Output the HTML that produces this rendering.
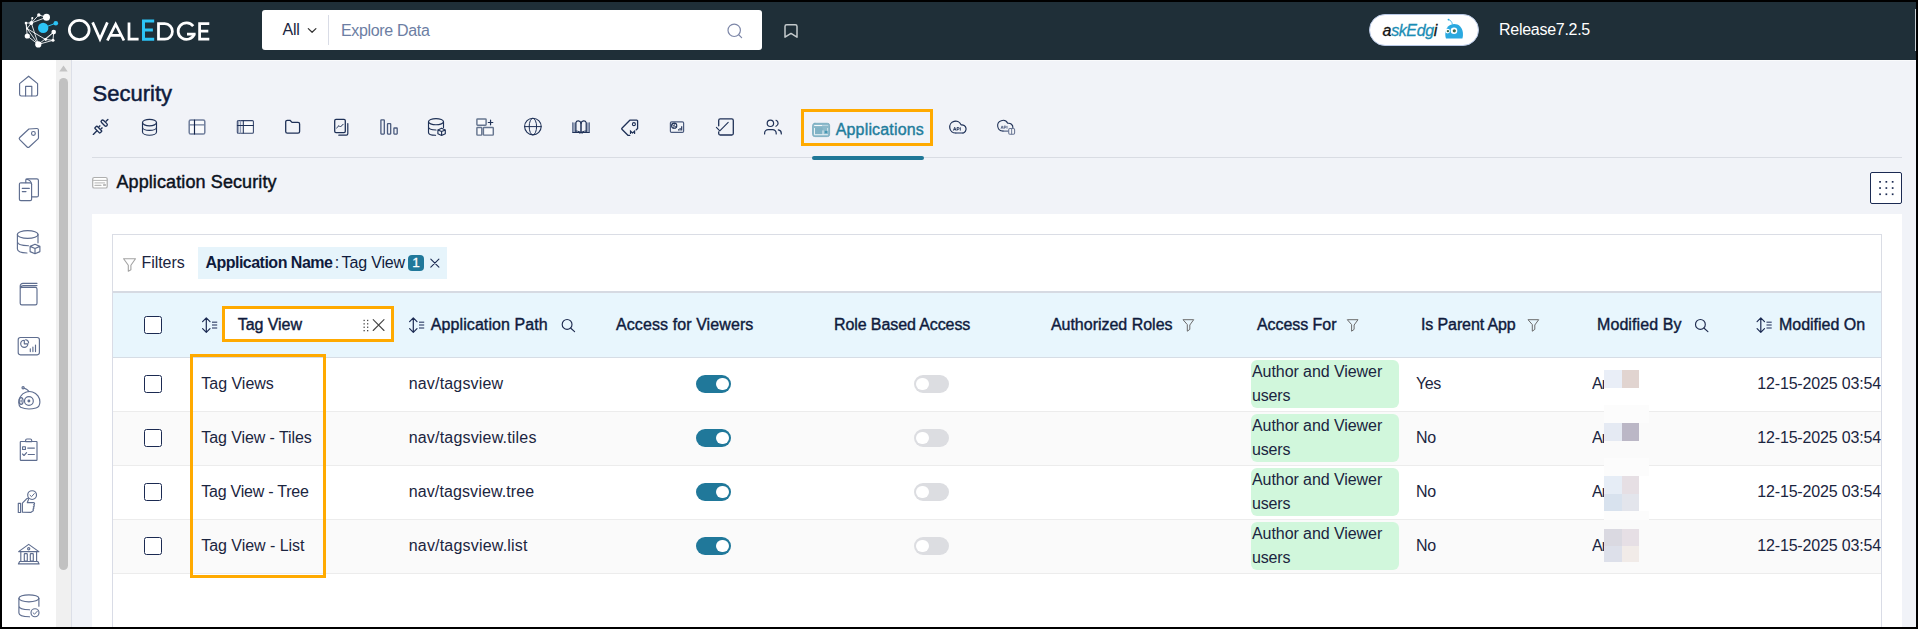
<!DOCTYPE html>
<html>
<head>
<meta charset="utf-8">
<title>Security - Applications</title>
<style>
*{box-sizing:border-box;margin:0;padding:0}
html,body{width:1918px;height:629px;overflow:hidden;background:#f1f3f8;font-family:"Liberation Sans",sans-serif;color:#0f1b3d}
#root{position:absolute;left:0;top:0;width:1918px;height:629px;overflow:hidden;background:#f1f3f8}
.abs{position:absolute}
.t{position:absolute;white-space:nowrap;line-height:1}
svg{position:absolute;overflow:visible}
/* frame */
#frame{position:absolute;left:0;top:0;width:1918px;height:629px;border:2px solid #000;z-index:50;pointer-events:none}
/* header */
#hdr{position:absolute;left:2px;top:2px;width:1914px;height:58px;background:#1f2f38}
#search{position:absolute;left:262px;top:10px;width:500px;height:40px;background:#fff;border-radius:3px}
#ask{position:absolute;left:1369px;top:14px;width:110px;height:32px;background:#fff;border-radius:16px;border:1px solid #b9c9e6}
/* sidebar */
#side{position:absolute;left:2px;top:60px;width:54px;height:567px;background:#fff}
#strack{position:absolute;left:56px;top:60px;width:15px;height:567px;background:#f0f0f0}
#sthumb{position:absolute;left:59px;top:77.5px;width:9px;height:492.5px;background:#c1c1c1;border-radius:5px}
#sline{position:absolute;left:71px;top:60px;width:1px;height:567px;background:#dcdfe8}
/* main */
#panel{position:absolute;left:92px;top:214px;width:1810px;height:413px;background:#fff}
#fbox{position:absolute;left:112px;top:234px;width:1770px;height:58px;border:1px solid #dadde5;background:#fff}
#vl{position:absolute;left:112px;top:291px;width:1px;height:336px;background:#d9dce6}
#vr{position:absolute;left:1881px;top:291px;width:1px;height:336px;background:#d9dce6}
#thead{position:absolute;left:113px;top:293px;width:1768px;height:64px;background:#e8f6fd}
.row{position:absolute;left:113px;width:1768px;height:54px;background:#fff;border-bottom:1px solid #ececec}
.row.alt{background:#fafafa}
.cb{position:absolute;left:144px;width:18px;height:18px;border:1.5px solid #1b2a52;border-radius:2.5px;background:#fff}
.hl{position:absolute;border:3px solid #ffaa00}
.tg{position:absolute;width:35px;height:18px;border-radius:9px}
.tg.on{background:#20789a}
.tg.off{background:#dcdde1}
.tg i{position:absolute;top:2.8px;width:12.4px;height:12.4px;border-radius:50%;background:#fff}
.tg.on i{left:20.4px}
.tg.off i{left:2.2px}
.badge{position:absolute;left:1251px;width:148px;height:48px;background:#d1f7dc;border-radius:6px}
#theadline{position:absolute;left:113px;top:291px;width:1768px;height:2px;background:#d6dae2}
</style>
</head>
<body>
<div id="root">
<div id="hdr"></div>
<div id="search"></div>
<div id="ask"></div>
<div id="side"></div>
<div id="strack"></div>
<div id="sthumb"></div>
<div id="sline"></div>
<div id="panel"></div>
<div id="fbox"></div>
<div id="vl"></div><div id="vr"></div>
<div id="thead"></div>
<div class="row" style="top:358px"></div>
<div class="row alt" style="top:412px"></div>
<div class="row" style="top:466px"></div>
<div class="row alt" style="top:520px"></div>
<div id="theadline"></div>
<div class="abs" style="left:113px;top:357px;width:1768px;height:1px;background:#d6dde5"></div>
<div class="abs" style="left:72px;top:60px;width:1844px;height:1px;background:#f9fafc"></div>
<div class="abs" style="left:1915px;top:9px;width:1px;height:42px;background:#c9d0d4"></div>
<div class="cb" style="top:316px"></div>
<div class="cb" style="top:375px"></div>
<div class="cb" style="top:429px"></div>
<div class="cb" style="top:483px"></div>
<div class="cb" style="top:537px"></div>
<div class="tg on" style="left:696px;top:375px"><i></i></div>
<div class="tg on" style="left:696px;top:429px"><i></i></div>
<div class="tg on" style="left:696px;top:483px"><i></i></div>
<div class="tg on" style="left:696px;top:537px"><i></i></div>
<div class="tg off" style="left:914px;top:375px"><i></i></div>
<div class="tg off" style="left:914px;top:429px"><i></i></div>
<div class="tg off" style="left:914px;top:483px"><i></i></div>
<div class="tg off" style="left:914px;top:537px"><i></i></div>
<div class="badge" style="top:360px"></div>
<div class="badge" style="top:414px"></div>
<div class="badge" style="top:468px"></div>
<div class="badge" style="top:522px"></div>
<!-- blurred name blocks -->
<div class="abs" style="left:1604px;top:370px;width:18px;height:18px;background:#e9eef7"></div>
<div class="abs" style="left:1622px;top:370px;width:17px;height:18px;background:#e1d4d0"></div>
<div class="abs" style="left:1604px;top:405px;width:45px;height:18px;background:#fcfcfc"></div>
<div class="abs" style="left:1604px;top:423px;width:18px;height:18px;background:#e5eaf3"></div>
<div class="abs" style="left:1622px;top:423px;width:17px;height:18px;background:#bbb7c6"></div>
<div class="abs" style="left:1604px;top:458px;width:45px;height:18px;background:#fcfcfc"></div>
<div class="abs" style="left:1604px;top:476px;width:18px;height:18px;background:#e6edf6"></div>
<div class="abs" style="left:1622px;top:476px;width:17px;height:18px;background:#e6dfe4"></div>
<div class="abs" style="left:1604px;top:494px;width:18px;height:17px;background:#d8e2ee"></div>
<div class="abs" style="left:1622px;top:494px;width:17px;height:17px;background:#e3e5ec"></div>
<div class="abs" style="left:1604px;top:511px;width:45px;height:9px;background:#fcfcfc"></div>
<div class="abs" style="left:1604px;top:529px;width:18px;height:17px;background:#dad9e1"></div>
<div class="abs" style="left:1622px;top:529px;width:17px;height:17px;background:#e6dfe5"></div>
<div class="abs" style="left:1604px;top:546px;width:18px;height:16px;background:#dde0ea"></div>
<div class="abs" style="left:1622px;top:546px;width:17px;height:16px;background:#f1ebe8"></div>
<!-- highlight boxes -->
<div class="abs" style="left:225px;top:309px;width:166px;height:30px;background:#fff"></div>
<div class="hl" style="left:222px;top:306px;width:172px;height:36px"></div>
<div class="hl" style="left:190px;top:354px;width:136px;height:224px"></div>
<div class="hl" style="left:801px;top:109px;width:132px;height:37px"></div>
<!-- tab underline + separator -->
<div class="abs" style="left:92px;top:157px;width:1810px;height:1px;background:#d9dce3"></div>
<div class="abs" style="left:812px;top:156px;width:112px;height:4px;background:#1f7797;border-radius:2px"></div>
<!-- chip -->
<div class="abs" style="left:198px;top:247px;width:249px;height:32px;background:#e6f4fb"></div>
<div class="abs" style="left:408px;top:255px;width:16px;height:16px;background:#20789a;border-radius:4px"></div>
<span class="abs" style="left:408px;top:256px;width:16px;text-align:center;font-size:13.5px;line-height:1;color:#fff;-webkit-text-stroke:0.3px #fff">1</span>
<!-- grid button -->
<div class="abs" style="left:1870px;top:172px;width:32px;height:32px;background:#fff;border:1px solid #1b2a52;border-radius:2px"></div>
<!-- search divider -->
<div class="abs" style="left:328px;top:15px;width:1px;height:30px;background:#d9dce6"></div>

<span class="t" id="t0" style="left:282.4px;top:22.0px;font-size:16px;color:#1b2540;letter-spacing:-0.160px;">All</span>
<span class="t" id="t1" style="left:341.0px;top:23.0px;font-size:16px;color:#6c7ea3;letter-spacing:-0.333px;">Explore Data</span>
<span class="t" id="t2" style="left:1499.0px;top:22.0px;font-size:16px;color:#ffffff;letter-spacing:-0.275px;">Release7.2.5</span>
<span class="t" id="t3" style="left:92.6px;top:83.0px;font-size:22px;color:#0f1b3d;-webkit-text-stroke:0.5px #0f1b3d;letter-spacing:-0.011px;">Security</span>
<span class="t" id="t4" style="left:835.7px;top:122.0px;font-size:16px;color:#1f7d9c;-webkit-text-stroke:0.4px #1f7d9c;letter-spacing:0.168px;">Applications</span>
<span class="t" id="t5" style="left:116.4px;top:173.0px;font-size:18px;color:#0b1220;-webkit-text-stroke:0.45px #0b1220;letter-spacing:0.110px;">Application Security</span>
<span class="t" id="t6" style="left:141.6px;top:255.0px;font-size:16px;color:#1b2540;letter-spacing:-0.080px;">Filters</span>
<span class="t" id="t7" style="left:205.4px;top:255.0px;font-size:16px;color:#0f1b3d;font-weight:bold;letter-spacing:-0.509px;">Application Name</span>
<span class="t" id="t8" style="left:334.8px;top:255.0px;font-size:16px;color:#0f1b3d;letter-spacing:-1.253px;">:</span>
<span class="t" id="t9" style="left:341.6px;top:255.0px;font-size:16px;color:#0f1b3d;letter-spacing:-0.155px;">Tag View</span>
<span class="t" id="t10" style="left:237.7px;top:317.0px;font-size:16px;color:#0f1b3d;-webkit-text-stroke:0.4px #0f1b3d;letter-spacing:-0.043px;">Tag View</span>
<span class="t" id="t11" style="left:430.8px;top:317.0px;font-size:16px;color:#0f1b3d;-webkit-text-stroke:0.4px #0f1b3d;letter-spacing:0.085px;">Application Path</span>
<span class="t" id="t12" style="left:616.0px;top:317.0px;font-size:16px;color:#0f1b3d;-webkit-text-stroke:0.4px #0f1b3d;letter-spacing:0.092px;">Access for Viewers</span>
<span class="t" id="t13" style="left:834.0px;top:317.0px;font-size:16px;color:#0f1b3d;-webkit-text-stroke:0.4px #0f1b3d;letter-spacing:-0.098px;">Role Based Access</span>
<span class="t" id="t14" style="left:1050.9px;top:317.0px;font-size:16px;color:#0f1b3d;-webkit-text-stroke:0.4px #0f1b3d;letter-spacing:-0.015px;">Authorized Roles</span>
<span class="t" id="t15" style="left:1257.0px;top:317.0px;font-size:16px;color:#0f1b3d;-webkit-text-stroke:0.4px #0f1b3d;letter-spacing:-0.062px;">Access For</span>
<span class="t" id="t16" style="left:1421.0px;top:317.0px;font-size:16px;color:#0f1b3d;-webkit-text-stroke:0.4px #0f1b3d;letter-spacing:-0.113px;">Is Parent App</span>
<span class="t" id="t17" style="left:1597.0px;top:317.0px;font-size:16px;color:#0f1b3d;-webkit-text-stroke:0.4px #0f1b3d;letter-spacing:0.082px;">Modified By</span>
<span class="t" id="t18" style="left:1779.0px;top:317.0px;font-size:16px;color:#0f1b3d;-webkit-text-stroke:0.4px #0f1b3d;letter-spacing:-0.024px;">Modified On</span>
<span class="t" id="t19" style="left:201.3px;top:376.0px;font-size:16px;color:#1b2540;letter-spacing:-0.016px;">Tag Views</span>
<span class="t" id="t20" style="left:408.7px;top:376.0px;font-size:16px;color:#1b2540;letter-spacing:0.175px;">nav/tagsview</span>
<span class="t" id="t21" style="left:1416.0px;top:376.0px;font-size:16px;color:#1b2540;letter-spacing:-0.370px;">Yes</span>
<span class="t" id="t22" style="left:1252.0px;top:364.0px;font-size:16px;color:#1b2540;letter-spacing:-0.067px;">Author and Viewer</span>
<span class="t" id="t23" style="left:1252.0px;top:388.0px;font-size:16px;color:#1b2540;letter-spacing:-0.165px;">users</span>
<span class="t" id="t24" style="left:1757.3px;top:376.0px;font-size:16px;color:#1b2540;letter-spacing:-0.171px;width:123.7px;overflow:hidden;">12-15-2025 03:54</span>
<span class="t" id="t25" style="left:1592.0px;top:376.0px;font-size:16px;color:#1b2540;width:12.0px;overflow:hidden;letter-spacing:-0.9px;">Ar</span>
<span class="t" id="t26" style="left:201.3px;top:430.0px;font-size:16px;color:#1b2540;letter-spacing:-0.084px;">Tag View - Tiles</span>
<span class="t" id="t27" style="left:408.7px;top:430.0px;font-size:16px;color:#1b2540;letter-spacing:0.188px;">nav/tagsview.tiles</span>
<span class="t" id="t28" style="left:1416.0px;top:430.0px;font-size:16px;color:#1b2540;letter-spacing:-0.227px;">No</span>
<span class="t" id="t29" style="left:1252.0px;top:418.0px;font-size:16px;color:#1b2540;letter-spacing:-0.067px;">Author and Viewer</span>
<span class="t" id="t30" style="left:1252.0px;top:442.0px;font-size:16px;color:#1b2540;letter-spacing:-0.165px;">users</span>
<span class="t" id="t31" style="left:1757.3px;top:430.0px;font-size:16px;color:#1b2540;letter-spacing:-0.171px;width:123.7px;overflow:hidden;">12-15-2025 03:54</span>
<span class="t" id="t32" style="left:1592.0px;top:430.0px;font-size:16px;color:#1b2540;width:12.0px;overflow:hidden;letter-spacing:-0.9px;">Ar</span>
<span class="t" id="t33" style="left:201.3px;top:484.0px;font-size:16px;color:#1b2540;letter-spacing:-0.238px;">Tag View - Tree</span>
<span class="t" id="t34" style="left:408.7px;top:484.0px;font-size:16px;color:#1b2540;letter-spacing:0.116px;">nav/tagsview.tree</span>
<span class="t" id="t35" style="left:1416.0px;top:484.0px;font-size:16px;color:#1b2540;letter-spacing:-0.227px;">No</span>
<span class="t" id="t36" style="left:1252.0px;top:472.0px;font-size:16px;color:#1b2540;letter-spacing:-0.067px;">Author and Viewer</span>
<span class="t" id="t37" style="left:1252.0px;top:496.0px;font-size:16px;color:#1b2540;letter-spacing:-0.165px;">users</span>
<span class="t" id="t38" style="left:1757.3px;top:484.0px;font-size:16px;color:#1b2540;letter-spacing:-0.171px;width:123.7px;overflow:hidden;">12-15-2025 03:54</span>
<span class="t" id="t39" style="left:1592.0px;top:484.0px;font-size:16px;color:#1b2540;width:12.0px;overflow:hidden;letter-spacing:-0.9px;">Ar</span>
<span class="t" id="t40" style="left:201.3px;top:538.0px;font-size:16px;color:#1b2540;letter-spacing:-0.043px;">Tag View - List</span>
<span class="t" id="t41" style="left:408.7px;top:538.0px;font-size:16px;color:#1b2540;letter-spacing:0.199px;">nav/tagsview.list</span>
<span class="t" id="t42" style="left:1416.0px;top:538.0px;font-size:16px;color:#1b2540;letter-spacing:-0.227px;">No</span>
<span class="t" id="t43" style="left:1252.0px;top:526.0px;font-size:16px;color:#1b2540;letter-spacing:-0.067px;">Author and Viewer</span>
<span class="t" id="t44" style="left:1252.0px;top:550.0px;font-size:16px;color:#1b2540;letter-spacing:-0.165px;">users</span>
<span class="t" id="t45" style="left:1757.3px;top:538.0px;font-size:16px;color:#1b2540;letter-spacing:-0.171px;width:123.7px;overflow:hidden;">12-15-2025 03:54</span>
<span class="t" id="t46" style="left:1592.0px;top:538.0px;font-size:16px;color:#1b2540;width:12.0px;overflow:hidden;letter-spacing:-0.9px;">Ar</span>
<!-- ===== full-canvas SVG overlay for icons ===== -->
<svg id="ic" width="1918" height="629" viewBox="0 0 1918 629" style="left:0;top:0" fill="none" stroke-linecap="round" stroke-linejoin="round">
<!-- LOGO ICON -->
<g stroke="#fff" stroke-width="0.85">
<path d="M38.8 15 L46.5 17.3 M31.3 23 L38.8 15 M31.3 23 L46.5 17.3 M32.3 18.1 L31.3 23 M26 23 L31.3 23 M26 23 L27.1 28.6 L38.3 44.4 M31.3 23 L38.3 44.4 M27.1 28.6 L45.6 39.5 L53 40.3 M27.3 36 L38.3 44.4 M38.3 44.4 L53.7 32.1 M38.3 44.4 L53 40.3 M53.7 32.1 L53 40.3 M45.6 39.5 L53.7 32.1 M31.3 23 L27.1 28.6 M26 23 L27.3 36"/>
</g>
<g fill="#fff" stroke="none">
<circle cx="46.5" cy="17.3" r="3.5"/><circle cx="38.8" cy="15" r="1.7"/><circle cx="32.3" cy="18.1" r="1.1"/>
<circle cx="26" cy="23" r="1.3"/><circle cx="31.3" cy="23" r="1.9"/><circle cx="27.1" cy="28.6" r="1.1"/><circle cx="27.3" cy="36" r="2.6"/>
<circle cx="38.3" cy="44.4" r="3.1"/><circle cx="53.7" cy="32.1" r="2.3"/><circle cx="53" cy="40.3" r="1.5"/><circle cx="45.6" cy="39.5" r="1.4"/>
</g>
<path d="M43.2 27.9 L55.8 23.2" stroke="#2cc4f6" stroke-width="1"/>
<circle cx="43.2" cy="27.9" r="5.2" fill="#2cc4f6"/><circle cx="55.8" cy="23.2" r="2.3" fill="#2cc4f6"/>
<!-- LOGO TEXT (stroked geometric letters) -->
<g stroke="#fff" stroke-width="2.75" stroke-linecap="butt" stroke-linejoin="miter">
<ellipse cx="79.25" cy="30.05" rx="9.9" ry="9.6"/>
<path d="M92.6 22.4 L100 39 L107.4 22.4"/>
<path d="M107.4 40.5 L115.65 24.2 L123.9 40.5 M110.6 35.4 H120.7" stroke-linejoin="miter"/>
<path d="M129 22.4 V39.2 H138.6"/>
<path d="M158.5 23.7 H164.8 A7.6 7.75 0 0 1 164.8 39.2 H158.5 Z"/>
<path d="M193.2 26.1 A8.4 8.3 0 1 0 194.3 34.3 V33.9 M195.6 34 H187"/>
<path d="M209.3 23.7 H199.6 V39.2 H209.3 M199.6 31.2 H208.3"/>
</g>
<path d="M154.2 20.9 H143.5 V39.3 H154.2 M143.5 29.9 H152.9" stroke="#2cc4f6" stroke-width="3" stroke-linecap="butt" stroke-linejoin="miter"/>
<!-- search box icons -->
<path d="M308.3 28.6 L312.1 32.3 L315.9 28.6" stroke="#333" stroke-width="1.2"/>
<circle cx="734.2" cy="30.3" r="6.2" stroke="#7d87a8" stroke-width="1.2"/>
<path d="M738.7 34.8 L741.6 37.6" stroke="#7d87a8" stroke-width="1.2"/>
<path d="M785 26.4 a1.7 1.7 0 0 1 1.7 -1.7 h8.6 a1.7 1.7 0 0 1 1.7 1.7 V37.2 L791 33.4 L785 37.2 Z" stroke="#c4cacc" stroke-width="1.5"/>
<!-- askEdgi robot -->
<path d="M1448.6 19.7 C1450.8 20.2 1452 21.8 1452.3 24" stroke="#29a8df" stroke-width="0.8"/>
<circle cx="1448.5" cy="19.6" r="0.9" fill="#29a8df"/>
<path d="M1446 38.4 C1444.8 36 1445 30 1448 26.6 C1451 23.2 1457 23 1460.2 26.4 C1463 29.4 1463.6 34.5 1462.4 38.4 Z" fill="#2aa9e0" stroke="none"/>
<circle cx="1447.6" cy="31.1" r="2.4" fill="#fff"/><circle cx="1454" cy="30.8" r="3.3" fill="#fff"/>
<circle cx="1447.9" cy="31.1" r="1.2" fill="#3d6b4c"/><circle cx="1454.3" cy="30.8" r="1.6" fill="#3d6b4c"/>
<!-- scroll arrow -->
<path d="M59.3 71.6 L63.5 65.4 L67.7 71.6 Z" fill="#c4c4c4" stroke="none"/>
<!-- SIDEBAR ICONS -->
<g stroke="#5e6d8f" stroke-width="1.15">
<!-- home -->
<path d="M19.6 83.6 L28.6 76.2 L37.6 83.6 V94.3 a1.7 1.7 0 0 1 -1.7 1.7 H21.3 a1.7 1.7 0 0 1 -1.7 -1.7 Z"/>
<path d="M25.6 95.8 V86.3 H31.8 V95.8"/>
<!-- tag -->
<path d="M28.9 129 L36.9 128.5 a1.4 1.4 0 0 1 1.5 1.4 L38.5 137.6 a1.6 1.6 0 0 1 -0.5 1.2 L29.2 147 a1.5 1.5 0 0 1 -2.1 0 L19.7 139.6 a1.5 1.5 0 0 1 0 -2.1 Z"/>
<circle cx="33.4" cy="133.4" r="1.9"/>
<!-- docs -->
<path d="M20.8 182.8 H30.2 a1.4 1.4 0 0 1 1.4 1.4 V199.2 a1.4 1.4 0 0 1 -1.4 1.4 H20.8 a1.4 1.4 0 0 1 -1.4 -1.4 V184.2 a1.4 1.4 0 0 1 1.4 -1.4 Z"/>
<path d="M25.8 182.6 V180.3 a1.5 1.5 0 0 1 1.5 -1.5 H36.9 a1.5 1.5 0 0 1 1.5 1.5 V195.4 a1.5 1.5 0 0 1 -1.5 1.5 H31.8"/>
<path d="M26.2 179.2 C29.5 179.6 31.3 181.5 31.6 184.4"/>
<path d="M22.3 188.4 H29.3 M22.3 191.6 H26"/>
<!-- db + cube -->
<ellipse cx="27.7" cy="234.5" rx="10.3" ry="3.9"/>
<path d="M17.4 234.5 V249 C17.4 251.2 21.5 252.8 27 253 M38 234.5 V242.8 M17.4 241.8 C17.4 244 21.5 245.6 28.5 245.7"/>
<path d="M35 244.3 L39.9 246.4 V251.6 L35 253.7 L30.1 251.6 V246.4 Z M30.1 246.4 L35 248.5 L39.9 246.4 M35 248.5 V253.7"/>
<!-- book -->
<path d="M20.2 303.2 V286 a2.7 2.7 0 0 1 2.7 -2.7 H37 M23.3 285.6 H37 M20.6 287.3 a3 3 0 0 1 2.7 -1.7 M20.2 289 a1.6 1.6 0 0 1 1.6 -1.6 H35.4 a1.6 1.6 0 0 1 1.6 1.6 V303.2 a1.6 1.6 0 0 1 -1.6 1.6 H21.8 a1.6 1.6 0 0 1 -1.6 -1.6 Z"/>
<!-- dashboard -->
<rect x="18.2" y="337.5" width="21.2" height="17.3" rx="2.2"/>
<path d="M24.3 340.2 a3.6 3.6 0 1 0 3.6 3.6 H24.3 Z M25.6 339.8 a3.4 3.4 0 0 1 3 3"/>
<path d="M30.3 351.6 V348.8 M32.9 351.6 V347 M35.5 351.6 V345"/>
<!-- robot -->
<circle cx="23.1" cy="387.7" r="1.1"/>
<path d="M24 388.2 C26.5 388.8 28.2 390 28.9 391.6"/>
<path d="M20.6 407.3 C18.3 405.5 18 400 20.5 396.5 C23 392.5 28 390.6 32.5 392 C37 393.4 40 397.8 39.9 402 C39.8 405 38.5 407.4 36 408 C31 409.3 25 409.2 20.6 407.3 Z"/>
<circle cx="28.9" cy="401" r="4.4"/><circle cx="28.9" cy="401" r="0.9" fill="#5e6d8f"/>
<ellipse cx="21.1" cy="401" rx="2" ry="3.4"/><path d="M21.1 400 V402"/>
<!-- clipboard -->
<path d="M25.6 441.5 H20.9 a0.6 0.6 0 0 0 -0.6 0.6 V459.7 a0.6 0.6 0 0 0 0.6 0.6 H36.4 a0.6 0.6 0 0 0 0.6 -0.6 V442.1 a0.6 0.6 0 0 0 -0.6 -0.6 H31.7"/>
<path d="M25.6 441.6 V440.4 a1.4 1.4 0 0 1 1.4 -1.4 H30.3 a1.4 1.4 0 0 1 1.4 1.4 V441.6 Z"/>
<rect x="22.6" y="446.7" width="2.8" height="2.8"/>
<path d="M27.7 448.1 H34.4 M22.5 454 L24 455.5 L26.6 452.7 M28.2 454.5 H34.4"/>
<!-- hand + check -->
<circle cx="32.1" cy="495.1" r="4.4"/>
<path d="M30 495.2 L31.5 496.7 L34.3 493.6" stroke-width="1"/>
<rect x="18.3" y="503.3" width="2.3" height="9.2"/>
<path d="M22.4 512.3 V503.2 L26.8 498.6 C27.8 497.8 28.8 498.6 28.4 499.8 L27.3 502.6 H33.6 C34.9 502.6 34.9 504.6 33.6 504.7 C34.6 505 34.5 506.8 33.3 506.9 C34.2 507.3 34 509 32.9 509.1 C33.7 509.6 33.4 511.2 32.4 511.3 L31 512.4 Z"/>
<!-- bank -->
<path d="M18.6 551.6 L28.7 544.4 L38.9 551.6 Z"/>
<circle cx="28.7" cy="548.7" r="1.1"/>
<path d="M20.8 552 V561 M36.6 552 V561"/>
<rect x="24.3" y="553.6" width="3" height="7.4" rx="0.6"/><rect x="30.3" y="553.6" width="3" height="7.4" rx="0.6"/>
<path d="M19.6 561.5 H37.9 M18.4 563.9 H39.1 M19.6 561.5 L18.4 563.9 M37.9 561.5 L39.1 563.9"/>
<!-- db + check -->
<ellipse cx="28.9" cy="598.3" rx="10" ry="3.5"/>
<path d="M18.9 598.3 V613 C18.9 615.2 23 616.7 29.5 616.8 M38.9 598.3 V606.2 M18.9 606 C18.9 608.2 23 609.7 29.6 609.8"/>
<circle cx="35" cy="612.7" r="4"/>
<path d="M33.1 612.8 L34.5 614.2 L37.6 610.9" stroke-width="1"/>
</g>
<!-- TAB ICONS -->
<g stroke="#1f3157" stroke-width="1.15">
<!-- 1 plug -->
<g stroke-width="1.35">
<path d="M93.3 134.4 L96.7 131 M106 121.3 L107.9 119.4"/>
<rect x="94.7" y="128.05" width="7.2" height="3.1" rx="0.5" transform="rotate(45 98.3 129.6)"/>
<rect x="100.45" y="121.6" width="7.5" height="3" rx="1.5" transform="rotate(45 104.2 123.1)"/>
<path d="M98.7 127 L100.3 125.4 M100.9 129.1 L102.5 127.5" stroke-linecap="butt"/>
</g>
<!-- 2 db -->
<ellipse cx="149.5" cy="122.6" rx="7" ry="3.2"/>
<path d="M142.5 122.6 V132 C142.5 133.8 145.6 135.2 149.5 135.2 C153.4 135.2 156.5 133.8 156.5 132 V122.6 M142.5 127.2 C142.5 129 145.6 130.4 149.5 130.4 C153.4 130.4 156.5 129 156.5 127.2"/>
<!-- 3 table -->
<rect x="189.2" y="119.9" width="15.6" height="14.2" rx="1.6" stroke="#6f7d9b" stroke-width="1.5" fill="#f9fafc"/>
<path d="M189.6 124.9 H204.4" stroke="#6f7d9b" stroke-width="1.4"/><path d="M194.5 120 V134" stroke="#14244a" stroke-width="1.15"/>
<!-- 4 table2 -->
<rect x="237.3" y="120.6" width="16.1" height="12.7" rx="1" stroke="#33436a" stroke-width="1.05" fill="#f9fafc"/>
<path d="M238.7 121 V133 M240.6 121 V133" stroke="#8f9ab4" stroke-width="1.1"/>
<path d="M243.3 120.8 V133 M237.4 125.5 H253.2" stroke="#1f3157" stroke-width="1.05"/>
<!-- 5 folder -->
<path d="M285.7 121.9 a1.6 1.6 0 0 1 1.6 -1.6 H290 L292 122.4 H298 a1.6 1.6 0 0 1 1.6 1.6 V131.6 a1.6 1.6 0 0 1 -1.6 1.6 H287.3 a1.6 1.6 0 0 1 -1.6 -1.6 Z" stroke-width="1.3"/>
<!-- 6 doc chart -->
<rect x="334.7" y="119.4" width="10.6" height="13.2" rx="1.3" stroke-width="1.3"/>
<path d="M347.8 123.6 V133.8 a1.4 1.4 0 0 1 -1.4 1.4 H338.8" stroke-width="1.2"/>
<path d="M336.6 128 L339 125.6 L340.4 127 L343.2 124.2" stroke-width="1"/>
<!-- 7 bars -->
<g stroke="#4a5a7d" stroke-width="1.3"><rect x="380.9" y="119.8" width="3.4" height="14.3" rx="0.5"/><rect x="387.5" y="123.7" width="3.2" height="10.4" rx="0.5"/><rect x="393.9" y="128" width="3.3" height="6.1" rx="0.5"/></g>
<!-- 8 db cube -->
<ellipse cx="436" cy="121.7" rx="7.5" ry="3.1"/>
<path d="M428.5 121.7 V132.4 C428.5 134 431.5 135.2 435.6 135.3 M443.5 121.7 V127.5 M428.5 127 C428.5 128.6 431.5 129.9 436 130"/>
<path d="M441.6 128.2 L445.3 129.9 V133.8 L441.6 135.5 L437.9 133.8 V129.9 Z M437.9 129.9 L441.6 131.6 L445.3 129.9 M441.6 131.6 V135.5"/>
<!-- 9 blocks+ -->
<g stroke="#66758f" stroke-width="1.45" fill="#f8f9fc"><rect x="476.9" y="118.9" width="9.2" height="6.4" rx="0.7"/><rect x="476.9" y="127.5" width="4.9" height="7.6" rx="0.7"/><rect x="483.4" y="127.5" width="9.9" height="7.6" rx="0.7"/></g>
<path d="M488.3 122.5 H492.8 M490.55 120.2 V124.8" stroke-width="1.2"/>
<!-- 10 globe -->
<circle cx="532.9" cy="126.6" r="8.3" stroke-width="1.1"/><ellipse cx="532.9" cy="126.6" rx="3.7" ry="8.3" stroke-width="1"/><path d="M524.6 126.6 H541.2" stroke-width="1"/>
<!-- 11 open book -->
<path d="M572.3 122.6 H575.8 V132.6 H572.3 Z M586.4 122.6 H589.8 V132.6 H586.4 Z" fill="#98a3ba" stroke="none"/>
<path d="M572.7 122.8 V132.4 M589.4 122.8 V132.4" stroke="#4a5a7d" stroke-width="0.8"/>
<path d="M575.9 132 V122.6 C576.6 120.2 580.2 120.2 581 123.2 C581.8 120.2 585.4 120.2 586.2 122.6 V132" stroke-width="1.2"/>
<path d="M581 123.2 V132.6" stroke-width="1.5"/>
<path d="M572.8 132.5 H589.2 M576 131 C578 131 580 131.8 582.2 133.2 M586 131 C584 131 582 131.8 579.8 133.2" stroke-width="1"/>
<!-- 12 tag M -->
<path d="M636.3 129.7 L637.6 128.5 V121 a0.8 0.8 0 0 0 -0.8 -0.8 H629.8 L621.9 128.3 a0.6 0.6 0 0 0 0 0.9 L627.9 135.3 H629.8" stroke-width="1.3"/>
<circle cx="633.9" cy="124.15" r="1.5" stroke-width="1.1"/>
<path d="M630.5 133.5 V131.2 L632.55 133 L634.6 131.2 V133.5" stroke-width="1.2" stroke-linejoin="miter"/>
<!-- 13 dashboard small -->
<rect x="670.4" y="121.8" width="13.2" height="10.6" rx="1.2" stroke="#4a5a7d" stroke-width="1.2"/>
<circle cx="674.2" cy="125.7" r="2.6" stroke-width="1.1"/><path d="M672 124.6 L676.2 126.9 M674.6 123.3 L673.6 128" stroke-width="0.7"/>
<path d="M678.6 130.6 V129.2 M680.1 130.6 V128 M681.7 130.6 V126.2" stroke-width="1.15" stroke-linecap="butt"/>
<!-- 14 check square -->
<path d="M718.7 125.8 V120.4 a1.5 1.5 0 0 1 1.5 -1.5 H731.8 a1.5 1.5 0 0 1 1.5 1.5 V133.5 a1.5 1.5 0 0 1 -1.5 1.5 H720.2 a1.5 1.5 0 0 1 -1.5 -1.5 V131.8" stroke-width="1.3"/>
<path d="M716.4 127.4 L719.8 130.8 L728.2 122.4" stroke-width="1.1"/>
<!-- 15 users -->
<circle cx="770.4" cy="123.3" r="3.2" stroke-width="1.2"/>
<path d="M764.6 133.9 V133.2 a3.6 3.6 0 0 1 3.6 -3.6 H772.6 a3.6 3.6 0 0 1 3.6 3.6 V133.9" stroke-width="1.2"/>
<path d="M776 120.3 a3.2 3.2 0 0 1 0 6 M778.3 129.8 a3.6 3.6 0 0 1 3 3.6 V133.9" stroke-width="1.2"/>
</g>
<!-- 16 applications icon -->
<rect x="812.6" y="123.3" width="17" height="13.3" rx="2.2" fill="#8cbacb" stroke="#78abc0" stroke-width="0.9"/>
<rect x="815" y="127.4" width="7.6" height="6.7" fill="#80b2c5" stroke="none"/>
<path d="M814.2 125.5 H822" stroke="#ffffff" stroke-width="0.9" stroke-linecap="butt"/>
<path d="M822 125.5 H828.2" stroke="#c4dbe5" stroke-width="0.8" stroke-linecap="butt"/>
<path d="M814.5 128 V134.7 H827.9" stroke="#ffffff" stroke-width="0.8" stroke-linecap="butt"/>
<path d="M827.6 128 V130.8" stroke="#e4eff4" stroke-width="0.8" stroke-linecap="butt"/>
<path d="M823 130.4 V134.4" stroke="#f3f8fa" stroke-width="0.9" stroke-linecap="butt"/>
<circle cx="826" cy="132" r="1.3" fill="#4597b3" stroke="none"/>
<!-- 17/18 api clouds -->
<g stroke="#1f3157" stroke-width="1.2">
<path d="M955.9 133 A5.9 5.9 0 1 1 961.1 124.9 A4.15 4.15 0 0 1 962.7 133.05"/>
<path d="M955.6 133.1 H963" stroke="#5d6c8c" stroke-width="1.5"/>
<path d="M953.4 130.6 L954.7 127.3 L956 130.6 M953.9 129.6 H955.5 M957.1 130.6 V127.5 H958.2 A0.95 0.95 0 0 1 958.2 129.4 H957.1 M960.3 127.3 V130.6" stroke-width="0.9" stroke-linecap="butt"/>
<path d="M1003.3 131 A5.3 5.3 0 1 1 1007.7 123.3 A4.3 4.3 0 0 1 1012.9 127.9" stroke-width="1.1"/>
<path d="M1002.6 131.1 H1008.4" stroke="#5d6c8c" stroke-width="1.4"/>
<path d="M1001 128.7 L1002.1 125.9 L1003.2 128.7 M1001.4 127.9 H1002.8 M1004.2 128.7 V126 H1005.1 A0.85 0.85 0 0 1 1005.1 127.7 H1004.2 M1007 125.9 V128.7" stroke="#4a5a7d" stroke-width="0.8" stroke-linecap="butt"/>
<rect x="1008.7" y="128.5" width="5.9" height="5.7" rx="1.2" fill="#f4f5f9" stroke="#6b7896" stroke-width="1.1"/>
<path d="M1011.65 128.6 V134.1" stroke="#6b7896" stroke-width="1"/>
</g>
<!-- Application Security icon -->
<rect x="92.7" y="177.5" width="14.5" height="10.5" rx="1.6" fill="#fff" stroke="#aeaeae" stroke-width="1.2"/>
<path d="M93 180.4 H107" stroke="#b5b5b5" stroke-width="1"/>
<path d="M95 182.9 H104.6" stroke="#c4c4c4" stroke-width="1.3"/>
<path d="M95 185.4 H101" stroke="#b9b9b9" stroke-width="1.2"/>
<path d="M103.6 185 h1.8" stroke="#a5a5a5" stroke-width="1.4"/>
<!-- Filters funnel -->
<path d="M123.6 258.7 H135.5 L130.9 265.2 V269.7 L128.3 271.2 V265.2 Z" stroke="#a3a3a3" stroke-width="1.1"/>
<!-- chip close -->
<path d="M430.8 259.1 L438.9 267.2 M438.9 259.1 L430.8 267.2" stroke="#1b2a52" stroke-width="1.1"/>
<!-- sort icons -->
<g id="sorti" stroke="#1b2a52" stroke-width="1.2">
<path d="M206.3 318 V332.2 M202.6 321.6 L206.3 317.9 L210 321.6 M202.6 328.6 L206.3 332.3 L210 328.6"/>
<path d="M212 322.2 H217.2 M212 325.1 H217.2 M212 328 H217.2" stroke="#5d6c8c" stroke-width="1.5" stroke-linecap="butt"/>
</g>
<g stroke="#1b2a52" stroke-width="1.2" transform="translate(207 0)">
<path d="M206.3 318 V332.2 M202.6 321.6 L206.3 317.9 L210 321.6 M202.6 328.6 L206.3 332.3 L210 328.6"/>
<path d="M212 322.2 H217.2 M212 325.1 H217.2 M212 328 H217.2" stroke="#5d6c8c" stroke-width="1.5" stroke-linecap="butt"/>
</g>
<g stroke="#1b2a52" stroke-width="1.2" transform="translate(1554.5 0)">
<path d="M206.3 318 V332.2 M202.6 321.6 L206.3 317.9 L210 321.6 M202.6 328.6 L206.3 332.3 L210 328.6"/>
<path d="M212 322.2 H217.2 M212 325.1 H217.2 M212 328 H217.2" stroke="#5d6c8c" stroke-width="1.5" stroke-linecap="butt"/>
</g>
<!-- drag dots + clear x in filter input -->
<g fill="#4a4a4a" stroke="none">
<rect x="363.5" y="319.8" width="1.3" height="1.3"/><rect x="367" y="319.8" width="1.3" height="1.3"/>
<rect x="363.5" y="323.2" width="1.3" height="1.3"/><rect x="367" y="323.2" width="1.3" height="1.3"/>
<rect x="363.5" y="326.6" width="1.3" height="1.3"/><rect x="367" y="326.6" width="1.3" height="1.3"/>
<rect x="363.5" y="330" width="1.3" height="1.3"/><rect x="367" y="330" width="1.3" height="1.3"/>
</g>
<path d="M373.2 319.7 L384 330.5 M384 319.7 L373.2 330.5" stroke="#444" stroke-width="1.1"/>
<!-- header search icons -->
<g id="srch" stroke="#1e2b4f" stroke-width="1.15"><circle cx="567.1" cy="324.4" r="4.9"/><path d="M570.8 328.2 L574.6 331.6"/></g>
<g stroke="#1e2b4f" stroke-width="1.15" transform="translate(1133.3 0)"><circle cx="567.1" cy="324.4" r="4.9"/><path d="M570.8 328.2 L574.6 331.6"/></g>
<!-- header filter icons -->
<g id="flt" stroke="#6a6a6a" stroke-width="1"><path d="M1183.4 319.7 H1193.7 L1189.8 325 V329.4 L1187.3 331.2 V325 Z"/></g>
<g stroke="#6a6a6a" stroke-width="1" transform="translate(164.3 0)"><path d="M1183.4 319.7 H1193.7 L1189.8 325 V329.4 L1187.3 331.2 V325 Z"/></g>
<g stroke="#6a6a6a" stroke-width="1" transform="translate(345 0)"><path d="M1183.4 319.7 H1193.7 L1189.8 325 V329.4 L1187.3 331.2 V325 Z"/></g>
<!-- grid dots -->
<g fill="#1b2a52" stroke="none">
<rect x="1879.2" y="181" width="1.7" height="1.7"/><rect x="1885.5" y="181" width="1.7" height="1.7"/><rect x="1891.8" y="181" width="1.7" height="1.7"/>
<rect x="1879.2" y="187.2" width="1.7" height="1.7"/><rect x="1885.5" y="187.2" width="1.7" height="1.7"/><rect x="1891.8" y="187.2" width="1.7" height="1.7"/>
<rect x="1879.2" y="193.4" width="1.7" height="1.7"/><rect x="1885.5" y="193.4" width="1.7" height="1.7"/><rect x="1891.8" y="193.4" width="1.7" height="1.7"/>
</g>
<!--MORE-->



</svg>
<span class="t" style="left:1382.6px;top:22.6px;font-size:16px;font-style:italic;color:#111;-webkit-text-stroke:0.3px #111;letter-spacing:-0.38px">a<span style="color:#1a8db5;-webkit-text-stroke:0.3px #1a8db5">skEdg</span>i</span>

<div id="frame"></div>
</div>
</body>
</html>
